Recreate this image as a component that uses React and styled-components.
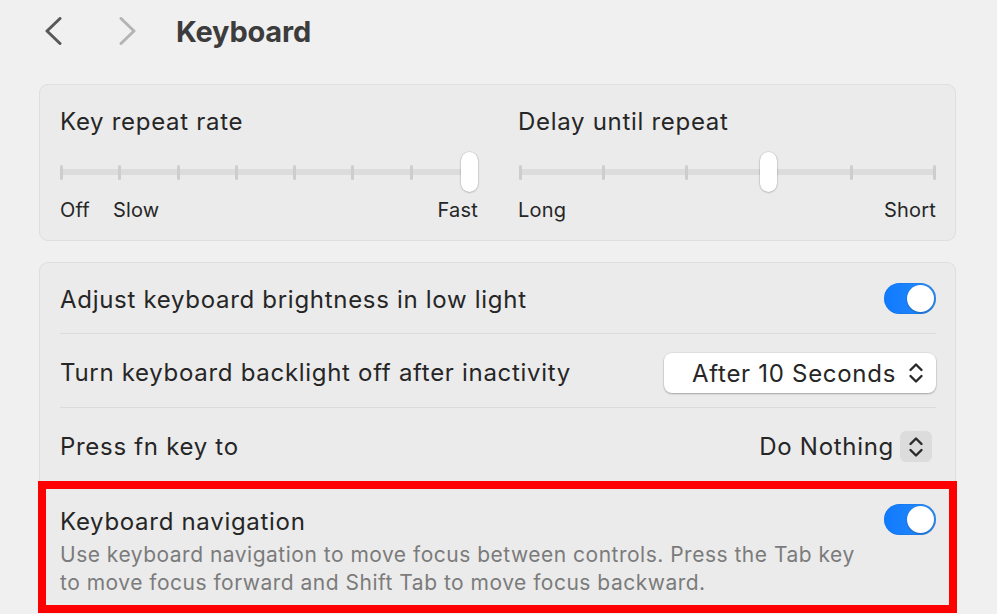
import React from "react";
import styled, { createGlobalStyle } from "styled-components";

const Global = createGlobalStyle`
  html, body { margin: 0; padding: 0; background: #f0f0f0; overflow: hidden; }
  body { font-family: Inter, "Liberation Sans", sans-serif; color: #262626; -webkit-font-smoothing: antialiased; }
`;

const Page = styled.div`
  width: 997px;
  height: 614px;
  box-sizing: border-box;
  padding: 0 41px 0 39px;
  background: #f0f0f0;
`;

const Header = styled.div`
  height: 62px;
  display: flex;
  align-items: center;
  padding-left: 6px;
  margin-bottom: 22px;
`;

const NavButton = styled.button`
  border: none;
  background: none;
  padding: 0;
  margin: 0 57px 0 0;
  width: 17px;
  height: 28px;
  display: flex;
  color: ${(p) => (p.$disabled ? "#b4b4b4" : "#585858")};
`;

const Title = styled.h1`
  margin: 0 0 0 -17px;
  font-size: 29px;
  font-weight: 700;
  color: #3c3c3c;
  letter-spacing: -0.2px;
`;

const Card = styled.div`
  background: #ebebeb;
  border: 1px solid #dedede;
  border-radius: 9px;
  margin-bottom: 21px;
  box-sizing: border-box;
`;

const SliderGrid = styled.div`
  display: grid;
  grid-template-columns: 418px 418px;
  column-gap: 40px;
  padding: 22px 19px 18px 20px;
`;

const SliderBlock = styled.div`
  display: flex;
  flex-direction: column;
`;

const Label = styled.div`
  font-size: 24px;
  line-height: 30px;
  letter-spacing: 0.7px;
  color: #262626;
`;

const SliderArea = styled.div`
  position: relative;
  height: 40px;
  margin-top: 15px;
  padding: ${(p) => p.$pad};
  display: flex;
  align-items: center;
`;

const TrackInner = styled.div`
  position: relative;
  flex: 1;
  height: 16px;
  display: flex;
  align-items: center;
`;

const Track = styled.div`
  position: absolute;
  left: 0;
  right: 0;
  top: 5px;
  height: 6px;
  border-radius: 3px;
  background: #dcdcdc;
`;

const Ticks = styled.div`
  position: relative;
  flex: 1;
  display: flex;
  justify-content: space-between;
  align-items: center;
`;

const Tick = styled.span`
  width: 3px;
  height: 15px;
  border-radius: 1.5px;
  background: #cdcdcd;
`;

const Knob = styled.div`
  position: absolute;
  top: -12px;
  width: 17px;
  height: 40px;
  margin-left: -8.5px;
  border-radius: 9px;
  background: #ffffff;
  box-shadow: 0 0.5px 2px rgba(0, 0, 0, 0.3), 0 0 0 0.5px rgba(0, 0, 0, 0.08);
`;

const Scale = styled.div`
  display: flex;
  gap: 23px;
  margin-top: 6px;
  font-size: 20px;
  line-height: 24px;
  letter-spacing: 0.2px;
  color: #262626;
`;

const Spacer = styled.span`
  flex: 1;
`;

const List = styled(Card)`
  padding: 0 19px 0 20px;
  border-bottom: none;
  border-radius: 9px 9px 0 0;
`;

const Row = styled.div`
  display: flex;
  align-items: center;
  justify-content: space-between;
  height: 69px;
  padding-top: 4px;
  border-top: 1px solid #dbdbdb;
  &:first-child {
    border-top: none;
    height: 66px;
  }
`;

const HighlightRow = styled.div`
  position: relative;
  display: flex;
  align-items: flex-start;
  justify-content: space-between;
  padding: 24px 0 15px;
  border-top: 1px solid #dbdbdb;
  &::after {
    content: "";
    position: absolute;
    top: -1px;
    left: -22px;
    right: -21px;
    bottom: -1px;
    border: 8px solid #ff0000;
    pointer-events: none;
  }
`;

const RowText = styled.div`
  font-size: 24px;
  line-height: 32px;
  letter-spacing: 0.7px;
  color: #262626;
`;

const Description = styled.div`
  font-size: 21px;
  line-height: 28px;
  letter-spacing: 0.5px;
  color: #7b7b7b;
  margin-top: 3px;
  width: 810px;
`;

const Toggle = styled.div`
  flex: none;
  width: 52px;
  height: 31px;
  margin-top: ${(p) => p.$offset || 0}px;
  border-radius: 16px;
  background: linear-gradient(90deg, #0f7aff, #2b8cf7);
  box-shadow: inset 0 0 0 0.5px rgba(0, 0, 0, 0.1);
  display: flex;
  align-items: center;
  justify-content: flex-end;
  padding: 0 2px;
  box-sizing: border-box;
`;

const ToggleKnob = styled.div`
  width: 27px;
  height: 27px;
  border-radius: 50%;
  background: #fff;
  box-shadow: 0 1px 2px rgba(0, 0, 0, 0.25);
`;

const PopUp = styled.div`
  width: 272px;
  height: 40px;
  margin-top: 1px;
  box-sizing: border-box;
  border-radius: 8px;
  background: #ffffff;
  box-shadow: 0 1px 2px rgba(0, 0, 0, 0.28), 0 0 0 0.5px rgba(0, 0, 0, 0.08);
  display: flex;
  align-items: center;
  justify-content: flex-end;
  gap: 12px;
  padding-right: 12px;
  font-size: 24px;
  letter-spacing: 0.7px;
  color: #262626;
`;

const InlineSelect = styled.div`
  display: flex;
  align-items: center;
  gap: 6px;
  font-size: 24px;
  letter-spacing: 0.7px;
  color: #262626;
  margin-right: 4px;
`;

const StepperBox = styled.div`
  width: 32px;
  height: 31px;
  border-radius: 6px;
  background: #dcdcdc;
  display: flex;
  align-items: center;
  justify-content: center;
`;

const ChevronLeft = () => (
  <svg width="17" height="28" viewBox="0 0 17 28" fill="none">
    <polyline points="15,1.5 2,14 15,26.5" stroke="currentColor" strokeWidth="3" strokeLinecap="round" strokeLinejoin="round" />
  </svg>
);
const ChevronRight = () => (
  <svg width="17" height="28" viewBox="0 0 17 28" fill="none">
    <polyline points="2,1.5 15,14 2,26.5" stroke="currentColor" strokeWidth="3" strokeLinecap="round" strokeLinejoin="round" />
  </svg>
);
const UpDown = () => (
  <svg width="16" height="22" viewBox="0 0 16 22" fill="none">
    <polyline points="2.5,8 8,2.5 13.5,8" stroke="#2a2a2a" strokeWidth="2.4" strokeLinecap="round" strokeLinejoin="round" />
    <polyline points="2.5,14 8,19.5 13.5,14" stroke="#2a2a2a" strokeWidth="2.4" strokeLinecap="round" strokeLinejoin="round" />
  </svg>
);

const Slider = ({ count, value, pad }) => (
  <SliderArea $pad={pad}>
    <TrackInner>
      <Track />
      <Ticks>
        {Array.from({ length: count }).map((_, i) => (
          <Tick key={i} />
        ))}
      </Ticks>
      <Knob style={{ left: `calc(${(value / (count - 1)) * 100}% - ${(value / (count - 1)) * 3 - 1.5}px)` }} />
    </TrackInner>
  </SliderArea>
);

export default function App() {
  return (
    <Page>
      <Global />
      <Header>
        <NavButton aria-label="Back"><ChevronLeft /></NavButton>
        <NavButton $disabled aria-label="Forward"><ChevronRight /></NavButton>
        <Title>Keyboard</Title>
      </Header>

      <Card>
        <SliderGrid>
          <SliderBlock>
            <Label>Key repeat rate</Label>
            <Slider count={8} value={7} pad="0 7px 0 0" />
            <Scale>
              <span>Off</span>
              <span>Slow</span>
              <Spacer />
              <span>Fast</span>
            </Scale>
          </SliderBlock>
          <SliderBlock>
            <Label>Delay until repeat</Label>
            <Slider count={6} value={3} pad="0 0 0 1px" />
            <Scale>
              <span>Long</span>
              <Spacer />
              <span>Short</span>
            </Scale>
          </SliderBlock>
        </SliderGrid>
      </Card>

      <List>
        <Row>
          <RowText>Adjust keyboard brightness in low light</RowText>
          <Toggle $offset={-3}><ToggleKnob /></Toggle>
        </Row>
        <Row>
          <RowText>Turn keyboard backlight off after inactivity</RowText>
          <PopUp>
            <span>After 10 Seconds</span>
            <UpDown />
          </PopUp>
        </Row>
        <Row>
          <RowText>Press fn key to</RowText>
          <InlineSelect>
            <span>Do Nothing</span>
            <StepperBox><UpDown /></StepperBox>
          </InlineSelect>
        </Row>
        <HighlightRow>
          <div>
            <RowText>Keyboard navigation</RowText>
            <Description>
              Use keyboard navigation to move focus between controls. Press the Tab key to move focus forward and Shift Tab to move focus backward.
            </Description>
          </div>
          <Toggle $offset={-2}><ToggleKnob /></Toggle>
        </HighlightRow>
      </List>
    </Page>
  );
}
